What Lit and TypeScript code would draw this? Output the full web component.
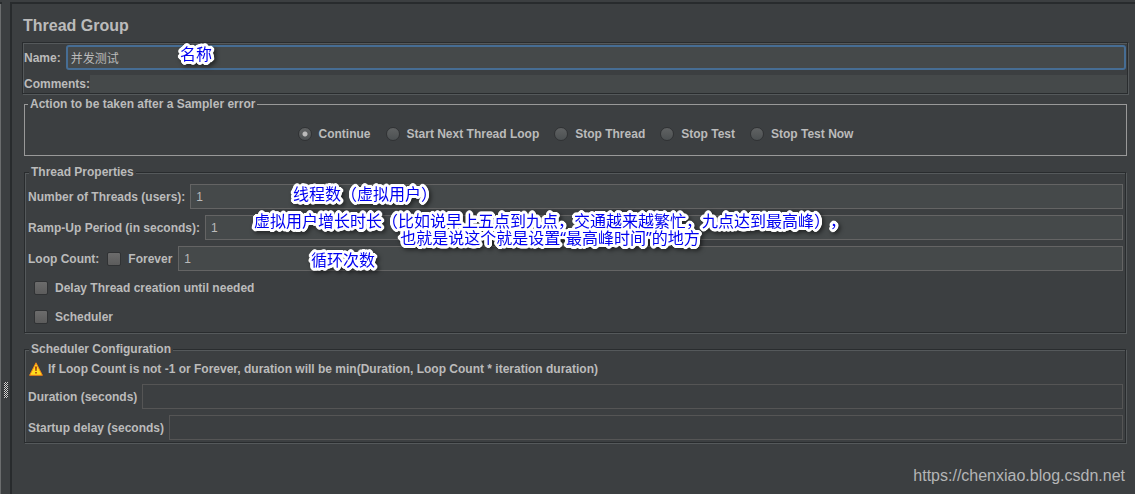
import { LitElement, html, css } from "lit";
import { customElement, property } from "lit/decorators.js";

/** Short remark laid over the form, with a white halo and a soft shadow. */
@customElement("note-mark")
export class NoteMark extends LitElement {
  static styles = css`
    :host {
      position: absolute;
      font: 16px/17px "Noto Sans", "Noto Sans CJK SC", sans-serif;
      text-spacing-trim: space-all;
      color: #0000f0;
      white-space: pre;
      text-align: center;
      filter: drop-shadow(1px 0 0 #fff) drop-shadow(-1px 0 0 #fff) drop-shadow(0 1px 0 #fff)
        drop-shadow(0 -1px 0 #fff) drop-shadow(1px 1px 0 #fff) drop-shadow(-1px -1px 0 #fff)
        drop-shadow(1px -1px 0 #fff) drop-shadow(-1px 1px 0 #fff)
        drop-shadow(2px 2px 2px rgba(0, 0, 0, 0.5));
      pointer-events: none;
    }
  `;
  render() {
    return html`<slot></slot>`;
  }
}

@customElement("app-root")
export class AppRoot extends LitElement {
  @property() action = "Continue";

  private actions = ["Continue", "Start Next Thread Loop", "Stop Thread", "Stop Test", "Stop Test Now"];

  static styles = css`
    :host {
      display: grid;
      grid-template-columns: 10px minmax(0, 1fr);
      box-sizing: border-box;
      min-height: 100vh;
      padding-top: 2px;
      background: linear-gradient(#282b2d, #282b2d) 0 2px / 2px 2px no-repeat #3c3f41;
      color: #bbb;
      font: bold 12px/16px "Liberation Sans", Arial, "Noto Sans CJK SC", sans-serif;
    }
    * {
      box-sizing: border-box;
    }
    .divider {
      display: flex;
      align-items: center;
      margin-top: 2px;
      border-left: 1px solid #6b6d6e;
    }
    .grip {
      display: block;
      margin: 282px 0 0 3px;
    }
    .panel {
      position: relative;
      padding: 12px 6px 0 10px;
      border: 2px solid #282b2d;
      border-right: 0;
      border-bottom: 0;
    }
    h1 {
      margin: 0 0 6px 1px;
      font-size: 16px;
      line-height: 20px;
    }
    fieldset {
      min-width: 0;
      margin: 0 2px 0 2px;
      padding: 0;
    }
    .etched {
      margin-right: 3px;
      padding-left: 1px;
      border: 1px solid #292c2e;
      box-shadow: 1px 1px 0 #55595b, inset 1px 1px 0 #55595b;
    }
    .heading {
      margin-right: 1px;
      padding-top: 2px;
    }
    .row {
      display: flex;
      align-items: center;
      gap: 5px;
    }
    .row input {
      flex: 1;
      min-width: 0;
    }
    input[type="text"] {
      height: 25px;
      margin: 0;
      padding: 0 5px;
      border: 1px solid #646464;
      border-radius: 0;
      outline: 0;
      background: #45494a;
      color: #bbb;
      font: 12px "Liberation Sans", "Noto Sans CJK SC", sans-serif;
    }
    input[type="text"].focused {
      margin-right: 1px;
      padding: 0 3px;
      border: 2px solid #466d94;
      border-radius: 3px;
    }
    .comments {
      gap: 0;
      margin-top: 5px;
    }
    .comments input[type="text"] {
      height: 18px;
      border: 0;
    }
    input[type="text"]:disabled {
      border-color: #555;
      background: #3c3f41;
    }
    legend {
      margin-left: 3px;
      padding: 0 2px;
      background: #3c3f41;
    }
    .actions {
      margin-top: 2px;
      border: 1px solid #999;
    }
    .choices {
      display: flex;
      flex-wrap: wrap;
      justify-content: center;
      gap: 15px;
      padding: 14px 0 13px;
    }
    .choice {
      display: flex;
      align-items: center;
      gap: 7px;
    }
    .properties {
      margin-top: 8px;
    }
    .fields {
      display: grid;
      gap: 6px;
      padding: 4px 2px 3px;
    }
    .forever {
      margin: 0 1px 0 3px;
    }
    .toggles {
      display: grid;
      gap: 13px;
      padding: 6px 8px 7px;
    }
    input[type="radio"],
    input[type="checkbox"] {
      appearance: none;
      flex: none;
      width: 14px;
      height: 14px;
      margin: 0;
      border: 1px solid #303234;
      background: linear-gradient(#606263, #4c5052);
    }
    input[type="radio"] {
      border-radius: 50%;
    }
    input[type="radio"]:checked {
      background: radial-gradient(circle, #bbb 2px, transparent 3px), linear-gradient(#606263, #4c5052);
    }
    input[type="checkbox"] {
      border-radius: 2px;
      background: linear-gradient(#6c6c6c, #5c5c5c);
    }
    .scheduler {
      margin-top: 8px;
    }
    .warning {
      display: flex;
      align-items: center;
      gap: 5px;
      margin: 0 0 1px 1px;
    }
    .scheduler .fields {
      padding-bottom: 2px;
    }
    .watermark {
      position: absolute;
      right: 10px;
      bottom: 8px;
      color: #b4b5b6;
      font: 16px/20px "Liberation Sans", Arial, sans-serif;
    }
    .note-name { left: 168px; top: 42px; }
    .note-threads { left: 281px; top: 182px; }
    .note-ramp { left: 242px; top: 209px; }
    .note-loop { left: 299px; top: 248px; }
  `;

  private field(id: string, label: string, value = "", disabled = false) {
    return html`<div class="row">
      <label for=${id}>${label}</label>
      <input id=${id} type="text" .value=${value} ?disabled=${disabled} />
    </div>`;
  }

  render() {
    return html`
      <div class="divider">
        <svg class="grip" width="4" height="16" viewBox="0 0 4 16" shape-rendering="crispEdges" aria-hidden="true">
          <defs>
            <pattern id="weave" width="2" height="2" patternUnits="userSpaceOnUse">
              <path d="M1 0h1v1h-1zM0 1h1v1h-1z" fill="#d0d0d0" />
              <path d="M0 0h1v1h-1zM1 1h1v1h-1z" fill="#2b2d2e" />
            </pattern>
          </defs>
          <rect width="4" height="16" fill="url(#weave)" />
        </svg>
      </div>
      <main class="panel">
        <h1>Thread Group</h1>
        <section class="etched heading">
          <div class="row">
            <label for="name">Name:</label>
            <input class="focused" id="name" type="text" value="并发测试" />
          </div>
          <div class="row comments">
            <label for="comments">Comments:</label>
            <input id="comments" type="text" />
          </div>
        </section>

        <fieldset class="actions">
          <legend>Action to be taken after a Sampler error</legend>
          <div class="choices">
            ${this.actions.map(
              (name) => html`<label class="choice"
                ><input type="radio" name="action" .checked=${name === this.action} @change=${() => (this.action = name)} />${name}</label
              >`
            )}
          </div>
        </fieldset>

        <fieldset class="etched properties">
          <legend>Thread Properties</legend>
          <div class="fields">
            ${this.field("threads", "Number of Threads (users):", "1")}
            ${this.field("ramp", "Ramp-Up Period (in seconds):", "1")}
            <div class="row">
              <label for="loops">Loop Count:</label>
              <label class="choice forever"><input type="checkbox" />Forever</label>
              <input id="loops" type="text" value="1" />
            </div>
          </div>
          <div class="toggles">
            <label class="choice"><input type="checkbox" />Delay Thread creation until needed</label>
            <label class="choice"><input type="checkbox" />Scheduler</label>
          </div>
        </fieldset>

        <fieldset class="etched scheduler">
          <legend>Scheduler Configuration</legend>
          <div class="fields">
            <div class="warning">
              <svg width="14" height="14" viewBox="0 0 14 14" aria-hidden="true">
                <path d="M7 .8 13.4 13.3H.6Z" fill="#ffdc1c" stroke="#f0801a" stroke-linejoin="round" />
                <path d="M6 4.5h2L7.6 9H6.4Z" fill="#a33a10" />
                <path d="M6.2 10h1.6v1.6H6.2Z" fill="#a33a10" />
              </svg>
              <span>If Loop Count is not -1 or Forever, duration will be min(Duration, Loop Count * iteration duration)</span>
            </div>
            ${this.field("duration", "Duration (seconds)", "", true)}
            ${this.field("delay", "Startup delay (seconds)", "", true)}
          </div>
        </fieldset>

        <note-mark class="note-name">名称</note-mark>
        <note-mark class="note-threads">线程数（虚拟用户）</note-mark>
        <note-mark class="note-ramp">虚拟用户增长时长（比如说早上五点到九点，交通越来越繁忙，九点达到最高峰），<br />也就是说这个就是设置“最高峰时间”的地方</note-mark>
        <note-mark class="note-loop">循环次数</note-mark>
        <div class="watermark">https://chenxiao.blog.csdn.net</div>
      </main>
    `;
  }
}
